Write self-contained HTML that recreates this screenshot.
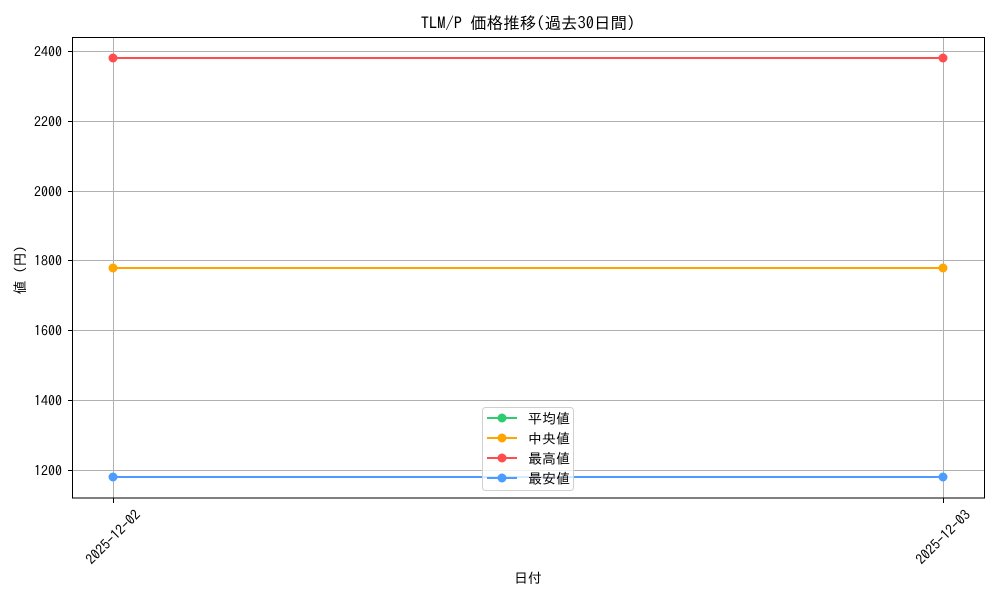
<!DOCTYPE html>
<html><head><meta charset="utf-8"><style>
html,body{margin:0;padding:0;background:#fff;}
svg text{font-family:"IPAGothic","Liberation Sans","Noto Sans CJK JP",sans-serif;fill:#000;}
</style></head><body>
<svg width="1000" height="600" viewBox="0 0 1000 600" xmlns="http://www.w3.org/2000/svg">
<rect width="1000" height="600" fill="#fff"/>
<text x="528" y="29" font-size="16.5" text-anchor="middle">TLM/P 価格推移(過去30日間)</text>
<g stroke="#b0b0b0" stroke-width="1">
<line x1="72.5" x2="984.5" y1="51.5" y2="51.5"/>
<line x1="72.5" x2="984.5" y1="121.5" y2="121.5"/>
<line x1="72.5" x2="984.5" y1="191.5" y2="191.5"/>
<line x1="72.5" x2="984.5" y1="260.5" y2="260.5"/>
<line x1="72.5" x2="984.5" y1="330.5" y2="330.5"/>
<line x1="72.5" x2="984.5" y1="400.5" y2="400.5"/>
<line x1="72.5" x2="984.5" y1="470.5" y2="470.5"/>
<line x1="113.5" x2="113.5" y1="37.5" y2="498"/>
<line x1="943.5" x2="943.5" y1="37.5" y2="498"/>
</g>
<g stroke="#000" stroke-width="1">
<line x1="68" x2="72.5" y1="51.5" y2="51.5"/>
<line x1="68" x2="72.5" y1="121.5" y2="121.5"/>
<line x1="68" x2="72.5" y1="191.5" y2="191.5"/>
<line x1="68" x2="72.5" y1="260.5" y2="260.5"/>
<line x1="68" x2="72.5" y1="330.5" y2="330.5"/>
<line x1="68" x2="72.5" y1="400.5" y2="400.5"/>
<line x1="68" x2="72.5" y1="470.5" y2="470.5"/>
<line x1="113.5" x2="113.5" y1="498" y2="503"/>
<line x1="943.5" x2="943.5" y1="498" y2="503"/>
</g>
<g font-size="14" text-anchor="end">
<text x="62" y="56.5">2400</text>
<text x="62" y="126.5">2200</text>
<text x="62" y="196.5">2000</text>
<text x="62" y="265.5">1800</text>
<text x="62" y="335.5">1600</text>
<text x="62" y="405.5">1400</text>
<text x="62" y="475.5">1200</text>
</g>
<g font-size="14" text-anchor="middle">
<text x="113" y="542" transform="rotate(-45 113 537)">2025-12-02</text>
<text x="943" y="542" transform="rotate(-45 943 537)">2025-12-03</text>
</g>
<text x="528" y="583" font-size="14" text-anchor="middle">日付</text>
<text x="25" y="270" font-size="14" text-anchor="middle" transform="rotate(-90 25 270)">値 (円)</text>
<line x1="113" x2="943" y1="58" y2="58" stroke="#ff4d4d" stroke-width="2"/>
<circle cx="113" cy="58" r="4.5" fill="#ff4d4d"/><circle cx="943" cy="58" r="4.5" fill="#ff4d4d"/>
<line x1="113" x2="943" y1="268" y2="268" stroke="#ffa500" stroke-width="2"/>
<circle cx="113" cy="268" r="4.5" fill="#ffa500"/><circle cx="943" cy="268" r="4.5" fill="#ffa500"/>
<line x1="113" x2="943" y1="477" y2="477" stroke="#4d9bff" stroke-width="2"/>
<circle cx="113" cy="477" r="4.5" fill="#4d9bff"/><circle cx="943" cy="477" r="4.5" fill="#4d9bff"/>
<rect x="72.5" y="37.5" width="912" height="460.5" fill="none" stroke="#000" stroke-width="1"/>
<rect x="482.5" y="407.5" width="91" height="83" rx="3" fill="#fff" fill-opacity="0.8" stroke="#d0d0d0"/>
<g stroke-width="2">
<line x1="487" x2="517" y1="418" y2="418" stroke="#2ecc71"/><circle cx="502" cy="418" r="4.5" fill="#2ecc71"/>
<line x1="487" x2="517" y1="438" y2="438" stroke="#ffa500"/><circle cx="502" cy="438" r="4.5" fill="#ffa500"/>
<line x1="487" x2="517" y1="458" y2="458" stroke="#ff4d4d"/><circle cx="502" cy="458" r="4.5" fill="#ff4d4d"/>
<line x1="487" x2="517" y1="478" y2="478" stroke="#4d9bff"/><circle cx="502" cy="478" r="4.5" fill="#4d9bff"/>
</g>
<g font-size="14">
<text x="528" y="423.5">平均値</text>
<text x="528" y="443.5">中央値</text>
<text x="528" y="463.5">最高値</text>
<text x="528" y="483.5">最安値</text>
</g>
</svg>
</body></html>
